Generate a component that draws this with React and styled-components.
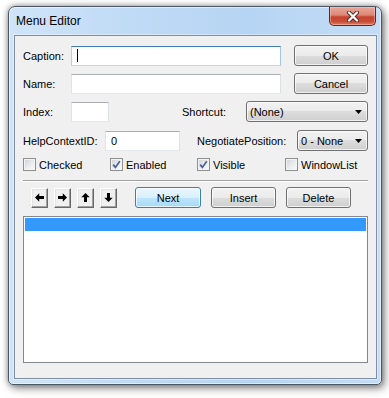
import styled, { createGlobalStyle } from 'styled-components';

const GlobalStyle = createGlobalStyle`
  * { box-sizing: border-box; }
  html, body { margin: 0; padding: 0; background: #fff; }
  body {
    font-family: "Liberation Sans", Arial, sans-serif;
    font-size: 11px;
    color: #000;
  }
`;

const Page = styled.div`
  width: 389px;
  height: 398px;
  padding: 6px 7px 0 8px;
`;

const Window = styled.div`
  width: 374px;
  height: 379px;
  display: flex;
  flex-direction: column;
  padding: 0 4px 5px 5px;
  border: 1px solid #4c5661;
  border-radius: 7px 7px 5px 5px;
  background: linear-gradient(to right, #cfe4f8 0%, #bfdaf5 35%, #b6d4f3 65%, #c4ddf6 100%);
  box-shadow: inset 0 0 0 1px rgba(255, 255, 255, 0.5), 0 0 6px rgba(0, 0, 0, 0.45),
    3px 4px 8px rgba(0, 0, 0, 0.35);
`;

const TitleBar = styled.div`
  height: 28px;
  display: flex;
  justify-content: space-between;
  align-items: flex-start;
  padding-left: 2px;
`;

const Title = styled.span`
  font-size: 12px;
  line-height: 28px;
  color: #000;
`;

const CloseButton = styled.div`
  width: 47px;
  height: 19px;
  margin-right: 1px;
  display: flex;
  align-items: center;
  justify-content: center;
  border: 1px solid #6b2419;
  border-top: none;
  border-radius: 0 0 5px 5px;
  background: linear-gradient(#e9a899 0%, #dc8675 45%, #c7432f 55%, #c84c36 80%, #dc7d62 100%);
  box-shadow: inset 0 0 0 1px rgba(255, 210, 200, 0.45);
`;

const Client = styled.div`
  flex: 1;
  display: flex;
  flex-direction: column;
  border: 1px solid #7f8ea2;
  background: #f0f0f0;
  padding: 9px 8px 15px 8px;
  box-shadow: 0 0 0 1px rgba(255, 255, 255, 0.4);
`;

const Row = styled.div`
  height: 21px;
  display: flex;
  align-items: center;
  justify-content: space-between;
  margin-bottom: ${p => p.$mb ?? 7}px;
`;

const Group = styled.div`
  display: flex;
  align-items: center;
`;

const Label = styled.span`
  width: ${p => p.$w}px;
  white-space: nowrap;
`;

const TextBox = styled.div`
  width: ${p => p.$w}px;
  height: 20px;
  display: flex;
  align-items: center;
  padding-left: 5px;
  background: #fff;
  border: 1px solid;
  border-color: ${p =>
    p.$focused ? '#3d7bad #a4c9e3 #b7d9ed #b5cfe7' : '#abadb3 #dbdfe6 #e3e9ef #e2e3ea'};
`;

const Caret = styled.span`
  width: 1px;
  height: 13px;
  background: #000;
`;

const Button = styled.div`
  width: ${p => p.$w}px;
  height: 21px;
  display: flex;
  align-items: center;
  justify-content: center;
  border: 1px solid ${p => (p.$default ? '#3c7fb1' : '#707070')};
  border-radius: 3px;
  background: ${p =>
    p.$default
      ? 'linear-gradient(#eaf6fd 0%, #d9f0fc 50%, #bee6fd 50%, #a7d9f5 100%)'
      : 'linear-gradient(#f2f2f2 0%, #ebebeb 50%, #dddddd 50%, #cfcfcf 100%)'};
  box-shadow: inset 0 0 0 1px rgba(255, 255, 255, 0.7);
`;

const Select = styled(Button)`
  justify-content: space-between;
  padding: 0 5px 0 3px;
`;

const Checks = styled.div`
  height: 13px;
  display: grid;
  grid-template-columns: 87px 87px 88px 1fr;
  margin-bottom: 9px;
`;

const CheckItem = styled.div`
  display: flex;
  align-items: center;
  gap: 3px;
`;

const Box = styled.div`
  width: 13px;
  height: 13px;
  border: 1px solid #8e8f8f;
  background: linear-gradient(135deg, #cfd2d7 0%, #eceef0 60%, #fafafa 100%);
  box-shadow: inset 0 0 0 1px #f4f4f4;
  display: flex;
  align-items: center;
  justify-content: center;
`;

const Separator = styled.div`
  height: 2px;
  border-top: 1px solid #a0a0a0;
  border-bottom: 1px solid #fff;
  margin-bottom: 5px;
`;

const ButtonBar = styled.div`
  height: 21px;
  display: flex;
  align-items: center;
  gap: 10px;
  margin-bottom: 8px;
`;

const Arrows = styled.div`
  display: flex;
  gap: 6px;
  margin-left: 8px;
  margin-right: 8px;
`;

const ArrowButton = styled.div`
  width: 17px;
  height: 20px;
  display: flex;
  align-items: center;
  justify-content: center;
  background: #f0f0f0;
  border: 1px solid;
  border-color: #fff #696969 #696969 #fff;
  box-shadow: inset -1px -1px 0 #a0a0a0, inset 1px 1px 0 #e3e3e3;
`;

const ListBox = styled.div`
  flex: 1;
  background: #fff;
  border: 1px solid #828790;
  padding: 1px;
`;

const ListRow = styled.div`
  height: 13px;
  background: ${p => (p.$selected ? '#3399ff' : 'transparent')};
`;

const rot = { left: 0, right: 180, up: 90, down: 270 };

function Arrow({ dir }) {
  return (
    <svg width="9" height="9" viewBox="0 0 9 9"
      style={{ transform: `rotate(${rot[dir]}deg)` }}>
      <polygon points="0,4.5 4.2,0.3 4.2,3 9,3 9,6 4.2,6 4.2,8.7" fill="#000" />
    </svg>
  );
}

function DropArrow() {
  return (
    <svg width="7" height="4" viewBox="0 0 7 4">
      <polygon points="0,0 7,0 3.5,4" fill="#000" />
    </svg>
  );
}

function Check({ label, checked }) {
  return (
    <CheckItem>
      <Box>
        {checked && (
          <svg width="9" height="9" viewBox="0 0 9 9">
            <path d="M1.2 4.6 L3.4 7.4 L7.8 1.2" fill="none" stroke="#4a5f97" strokeWidth="1.7" />
          </svg>
        )}
      </Box>
      <span>{label}</span>
    </CheckItem>
  );
}

export default function App() {
  return (
    <Page>
      <GlobalStyle />
      <Window>
        <TitleBar>
          <Title>Menu Editor</Title>
          <CloseButton>
            <svg width="14" height="11" viewBox="0 0 14 11">
              <path d="M3 1.5 L11 9.5 M11 1.5 L3 9.5" stroke="#4b2a26" strokeWidth="4" strokeLinecap="round" />
              <path d="M3 1.5 L11 9.5 M11 1.5 L3 9.5" stroke="#fff" strokeWidth="2.3" strokeLinecap="round" />
            </svg>
          </CloseButton>
        </TitleBar>

        <Client>
          <Row>
            <Group>
              <Label $w={48}>Caption:</Label>
              <TextBox $w={210} $focused>
                <Caret />
              </TextBox>
            </Group>
            <Button $w={74}>OK</Button>
          </Row>

          <Row>
            <Group>
              <Label $w={48}>Name:</Label>
              <TextBox $w={210} />
            </Group>
            <Button $w={74}>Cancel</Button>
          </Row>

          <Row $mb={8}>
            <Group>
              <Label $w={48}>Index:</Label>
              <TextBox $w={38} />
            </Group>
            <Group>
              <Label $w={64}>Shortcut:</Label>
              <Select $w={122}>
                <span>(None)</span>
                <DropArrow />
              </Select>
            </Group>
          </Row>

          <Row>
            <Group>
              <Label $w={82}>HelpContextID:</Label>
              <TextBox $w={75}>0</TextBox>
            </Group>
            <Group>
              <Label $w={100}>NegotiatePosition:</Label>
              <Select $w={71}>
                <span>0 - None</span>
                <DropArrow />
              </Select>
            </Group>
          </Row>

          <Checks>
            <Check label="Checked" />
            <Check label="Enabled" checked />
            <Check label="Visible" checked />
            <Check label="WindowList" />
          </Checks>

          <Separator />

          <ButtonBar>
            <Arrows>
              <ArrowButton><Arrow dir="left" /></ArrowButton>
              <ArrowButton><Arrow dir="right" /></ArrowButton>
              <ArrowButton><Arrow dir="up" /></ArrowButton>
              <ArrowButton><Arrow dir="down" /></ArrowButton>
            </Arrows>
            <Button $w={66} $default>Next</Button>
            <Button $w={65}>Insert</Button>
            <Button $w={65}>Delete</Button>
          </ButtonBar>

          <ListBox>
            <ListRow $selected />
          </ListBox>
        </Client>
      </Window>
    </Page>
  );
}
